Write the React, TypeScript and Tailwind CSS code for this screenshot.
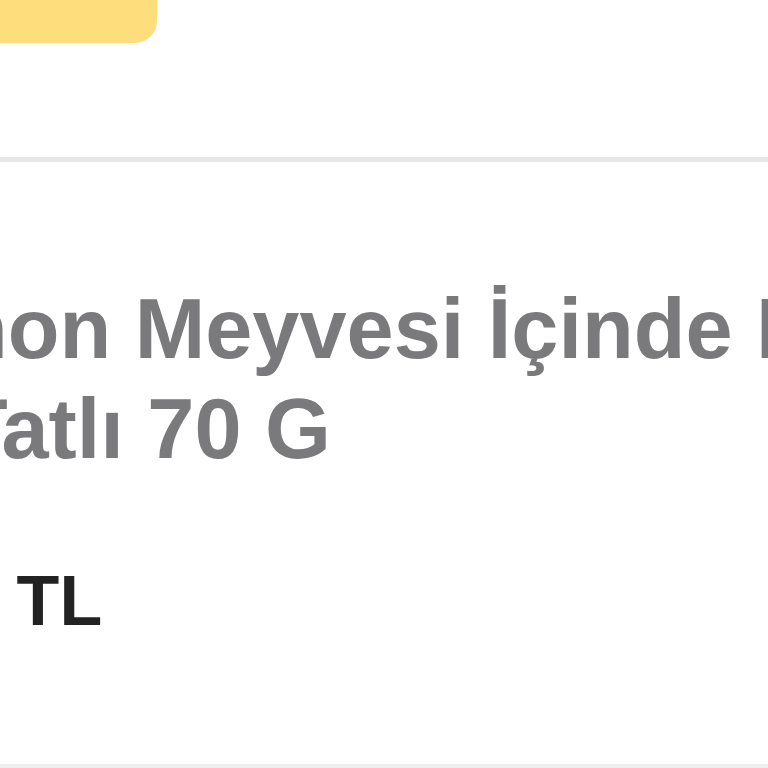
export default function App() {
  return (
    <div className="w-[768px] h-[768px] overflow-hidden bg-white flex flex-col font-['Liberation_Sans',Arial,sans-serif]">
      {/* top bar with the yellow button cut off */}
      <div className="h-[157px] shrink-0">
        <div className="w-[157px] h-[43px] bg-[#fedd7c] rounded-br-[22px]" />
      </div>
      <div className="h-[5px] shrink-0 bg-[#e8e8e8]" />

      <div className="flex-1 flex flex-col">
        <h2 className="mt-[117px] -ml-[44px] w-[1150px] text-[84.7px] leading-[100px] font-bold text-[#7a7a7d]">
          non Meyvesi İçinde Limon Tatlı 70 G
        </h2>
        <div className="mt-[82px] -ml-[178px] whitespace-nowrap text-[70px] leading-[80px] font-bold text-[#222222]">
          24,95 TL
        </div>
        <div className="flex-1" />
      </div>
      <div className="h-[4px] shrink-0 bg-[#efefef]" />
    </div>
  );
}
